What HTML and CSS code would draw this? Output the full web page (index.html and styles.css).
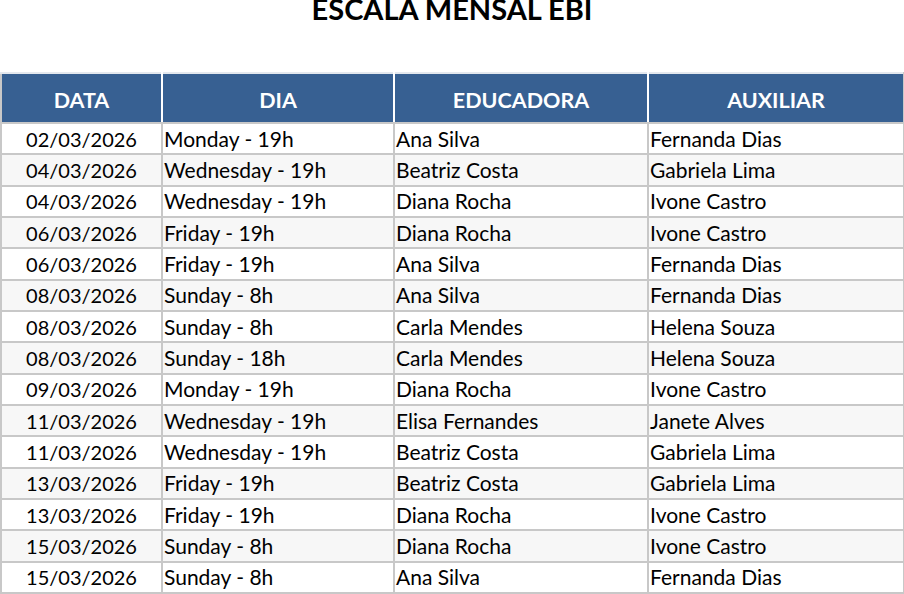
FILE: index.html
```html
<!DOCTYPE html>
<html lang="pt">
<head>
<meta charset="utf-8">
<title>Escala Mensal EBI</title>
<link rel="stylesheet" href="styles.css">
</head>
<body>
<h1 class="title">ESCALA MENSAL EBI</h1>
<table class="grid">
  <colgroup>
    <col class="c-data"><col class="c-dia"><col class="c-edu"><col class="c-aux">
  </colgroup>
  <thead>
    <tr><th>DATA</th><th>DIA</th><th>EDUCADORA</th><th>AUXILIAR</th></tr>
  </thead>
  <tbody>
    <tr><td class="date">02/03/2026</td><td>Monday - 19h</td><td>Ana Silva</td><td>Fernanda Dias</td></tr>
    <tr><td class="date">04/03/2026</td><td>Wednesday - 19h</td><td>Beatriz Costa</td><td>Gabriela Lima</td></tr>
    <tr><td class="date">04/03/2026</td><td>Wednesday - 19h</td><td>Diana Rocha</td><td>Ivone Castro</td></tr>
    <tr><td class="date">06/03/2026</td><td>Friday - 19h</td><td>Diana Rocha</td><td>Ivone Castro</td></tr>
    <tr><td class="date">06/03/2026</td><td>Friday - 19h</td><td>Ana Silva</td><td>Fernanda Dias</td></tr>
    <tr><td class="date">08/03/2026</td><td>Sunday - 8h</td><td>Ana Silva</td><td>Fernanda Dias</td></tr>
    <tr><td class="date">08/03/2026</td><td>Sunday - 8h</td><td>Carla Mendes</td><td>Helena Souza</td></tr>
    <tr><td class="date">08/03/2026</td><td>Sunday - 18h</td><td>Carla Mendes</td><td>Helena Souza</td></tr>
    <tr><td class="date">09/03/2026</td><td>Monday - 19h</td><td>Diana Rocha</td><td>Ivone Castro</td></tr>
    <tr><td class="date">11/03/2026</td><td>Wednesday - 19h</td><td>Elisa Fernandes</td><td>Janete Alves</td></tr>
    <tr><td class="date">11/03/2026</td><td>Wednesday - 19h</td><td>Beatriz Costa</td><td>Gabriela Lima</td></tr>
    <tr><td class="date">13/03/2026</td><td>Friday - 19h</td><td>Beatriz Costa</td><td>Gabriela Lima</td></tr>
    <tr><td class="date">13/03/2026</td><td>Friday - 19h</td><td>Diana Rocha</td><td>Ivone Castro</td></tr>
    <tr><td class="date">15/03/2026</td><td>Sunday - 8h</td><td>Diana Rocha</td><td>Ivone Castro</td></tr>
    <tr><td class="date">15/03/2026</td><td>Sunday - 8h</td><td>Ana Silva</td><td>Fernanda Dias</td></tr>
  </tbody>
</table>
</body>
</html>
```

FILE: styles.css
```css
html, body {
  margin: 0;
  padding: 0;
  background: #ffffff;
}
body {
  font-family: Lato, "Liberation Sans", sans-serif;
  color: #000000;
  width: 904px;
  height: 594px;
  overflow: hidden;
}
.title {
  margin: -6px 0 0 0;
  height: 78px;
  padding: 0;
  font-size: 29px;
  line-height: 29px;
  font-weight: 700;
  text-align: center;
}
.grid {
  border-collapse: collapse;
  width: 903px;
  table-layout: fixed;
  margin-top: 0;
}
.c-data { width: 161px; }
.c-dia { width: 232px; }
.c-edu { width: 254px; }
.c-aux { width: 256px; }
.grid th {
  background: #376092;
  color: #ffffff;
  font-weight: 700;
  font-size: 21.5px;
  height: 50px;
  padding: 3px 0 0 0;
  box-sizing: border-box;
  text-align: center;
  vertical-align: middle;
  border: 2px solid #ffffff;
  border-top-color: #e4e8ee;
  border-bottom-color: #c8c8c8;
}
.grid th:first-child { border-left-color: #c8c8c8; }
.grid th:last-child { border-right-color: #c8c8c8; }
.grid td {
  font-size: 21px;
  line-height: 24px;
  height: 31.33px;
  box-sizing: border-box;
  padding: 0 0 0 1px;
  border: 2px solid #c8c8c8;
  vertical-align: middle;
  white-space: nowrap;
  overflow: hidden;
}
.grid td.date {
  font-size: 20px;
  text-align: center;
  padding: 0;
}
.grid tbody tr:nth-child(even) td {
  background: #f7f7f7;
}
```
